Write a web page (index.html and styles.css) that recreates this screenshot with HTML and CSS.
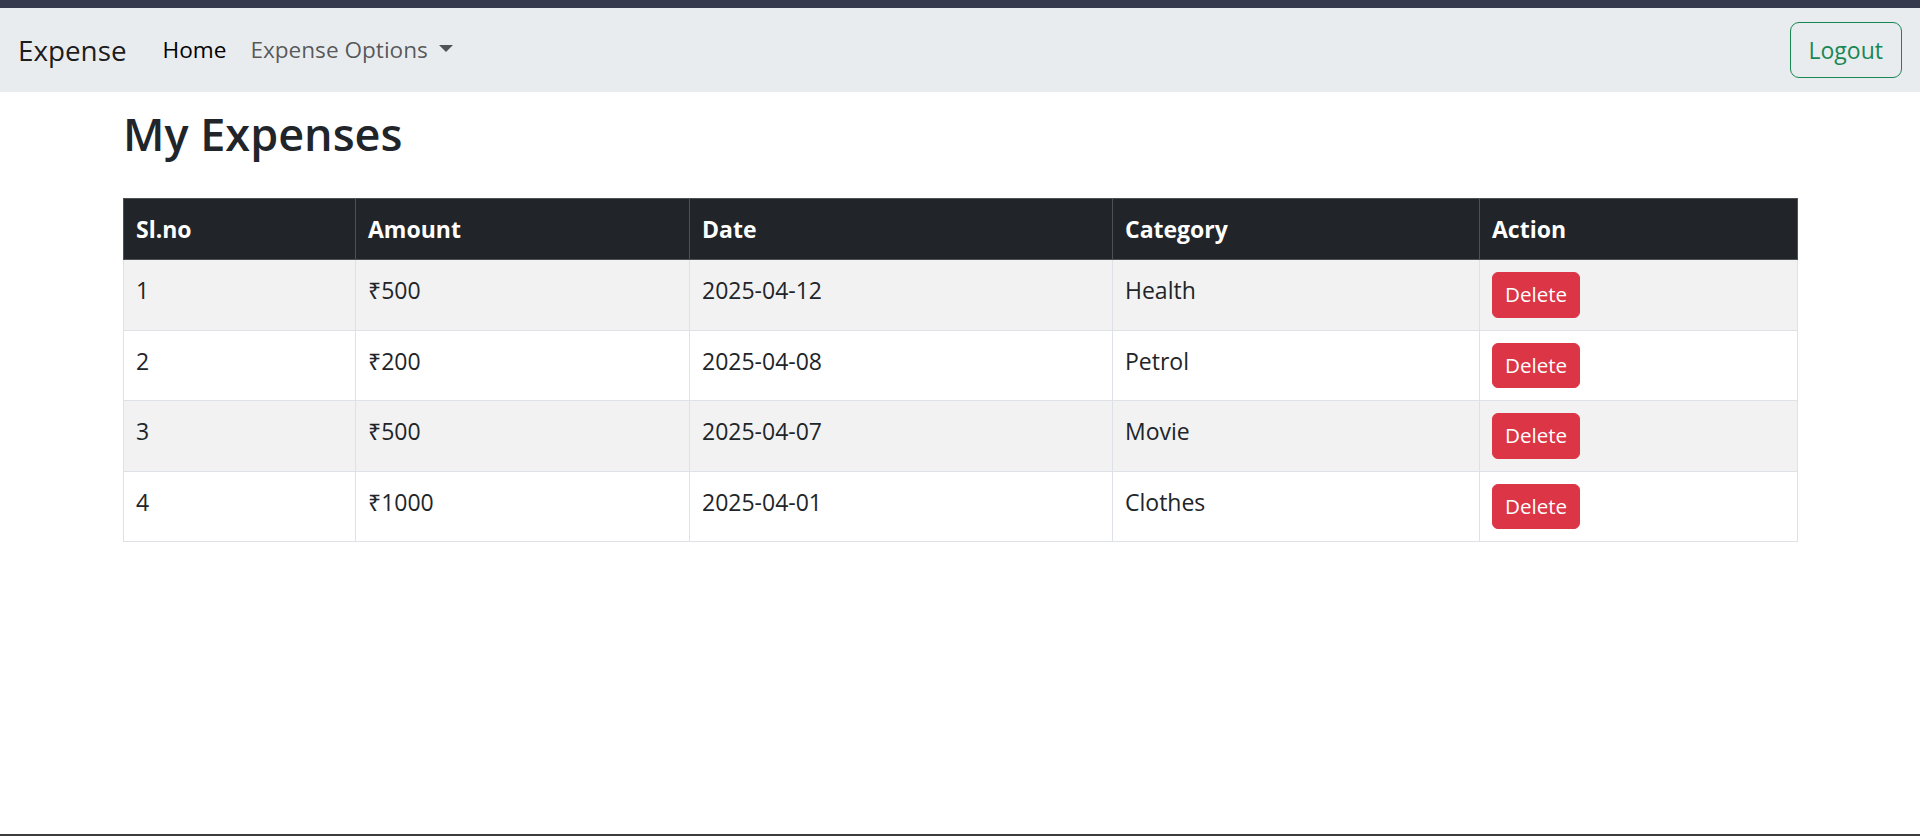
FILE: index.html
```html
<!DOCTYPE html>
<html lang="en">
<head>
<meta charset="utf-8">
<title>My Expenses</title>
<link rel="stylesheet" href="styles.css">
</head>
<body>
<div class="page">
  <div class="topbar"></div>
  <nav class="navbar">
    <a class="brand" href="#">Expense</a>
    <ul class="nav">
      <li><a class="nav-link active" href="#">Home</a></li>
      <li><a class="nav-link dropdown-toggle" href="#">Expense Options<span class="caret"></span></a></li>
    </ul>
    <button class="btn-logout" type="button">Logout</button>
  </nav>
  <main class="container">
    <h2 class="title">My Expenses</h2>
    <table class="expenses">
      <colgroup>
        <col class="c1"><col class="c2"><col class="c3"><col class="c4"><col class="c5">
      </colgroup>
      <thead>
        <tr><th>Sl.no</th><th>Amount</th><th>Date</th><th>Category</th><th>Action</th></tr>
      </thead>
      <tbody>
        <tr class="odd"><td>1</td><td>₹500</td><td>2025-04-12</td><td>Health</td><td><button class="btn-delete" type="button">Delete</button></td></tr>
        <tr><td>2</td><td>₹200</td><td>2025-04-08</td><td>Petrol</td><td><button class="btn-delete" type="button">Delete</button></td></tr>
        <tr class="odd"><td>3</td><td>₹500</td><td>2025-04-07</td><td>Movie</td><td><button class="btn-delete" type="button">Delete</button></td></tr>
        <tr><td>4</td><td>₹1000</td><td>2025-04-01</td><td>Clothes</td><td><button class="btn-delete" type="button">Delete</button></td></tr>
      </tbody>
    </table>
  </main>
  <div class="bottombar"></div>
</div>
</body>
</html>
```
FILE: styles.css
```css
* { box-sizing: border-box; }
html, body { margin: 0; padding: 0; }
body {
  font-family: "Open Sans", "Noto Sans", sans-serif;
  color: #212529;
  background: #fff;
}
.page {
  display: flex;
  flex-direction: column;
  min-height: 100vh;
}
.topbar {
  height: 8px;
  background: #363a4d;
  flex: none;
}
.navbar {
  flex: none;
  height: 84px;
  background: #e9ecef;
  display: flex;
  align-items: center;
  padding: 12px 18px;
}
.brand {
  font-size: 27.8px;
  line-height: 45px;
  padding: 7.5px 0;
  margin-right: 24px;
  color: rgba(0,0,0,.9);
  text-decoration: none;
}
.nav {
  list-style: none;
  margin: 0;
  padding: 0;
  display: flex;
}
.nav-link {
  display: block;
  font-size: 22.6px;
  line-height: 36px;
  padding: 12px 12px;
  color: rgba(0,0,0,.65);
  text-decoration: none;
}
.nav-link.active { color: #000; }
.caret {
  display: inline-block;
  margin-left: 11px;
  vertical-align: 6px;
  border-top: 7px solid currentColor;
  border-left: 7px solid transparent;
  border-right: 7px solid transparent;
  border-bottom: 0;
}
.btn-logout {
  margin-left: auto;
  font-family: inherit;
  font-size: 23px;
  line-height: 36px;
  padding: 9px 18px;
  border: 1px solid #198754;
  border-radius: 9px;
  background: transparent;
  color: #198754;
}
.container {
  width: 1674px;
  margin: 0 auto;
  flex: none;
}
.title {
  font-size: 45px;
  font-weight: 600;
  line-height: 58px;
  margin: 13px 0 0;
  color: #212529;
}
.expenses {
  margin-top: 35px;
  width: 1674px;
  border-collapse: collapse;
  table-layout: fixed;
  font-size: 23px;
  line-height: 36px;
}
.c1 { width: 232px; }
.c2 { width: 334px; }
.c3 { width: 423px; }
.c4 { width: 367px; }
.c5 { width: 318px; }
.expenses th,
.expenses td {
  padding: 12px;
  text-align: left;
  vertical-align: top;
  border: 1px solid #dee2e6;
}
.expenses th {
  background: #212529;
  color: #fff;
  font-weight: 700;
  border-color: #4d5154;
}
.expenses td { color: #212529; }
.expenses tr.odd td { background: #f2f2f2; }
.btn-delete {
  display: inline-block;
  font-family: inherit;
  font-size: 20.6px;
  line-height: 31.5px;
  padding: 6px 12px;
  border: 1px solid #dc3545;
  border-radius: 6px;
  background: #dc3545;
  color: #fff;
}
.bottombar {
  margin-top: auto;
  height: 2px;
  background: #3c3c3c;
  flex: none;
}
```
